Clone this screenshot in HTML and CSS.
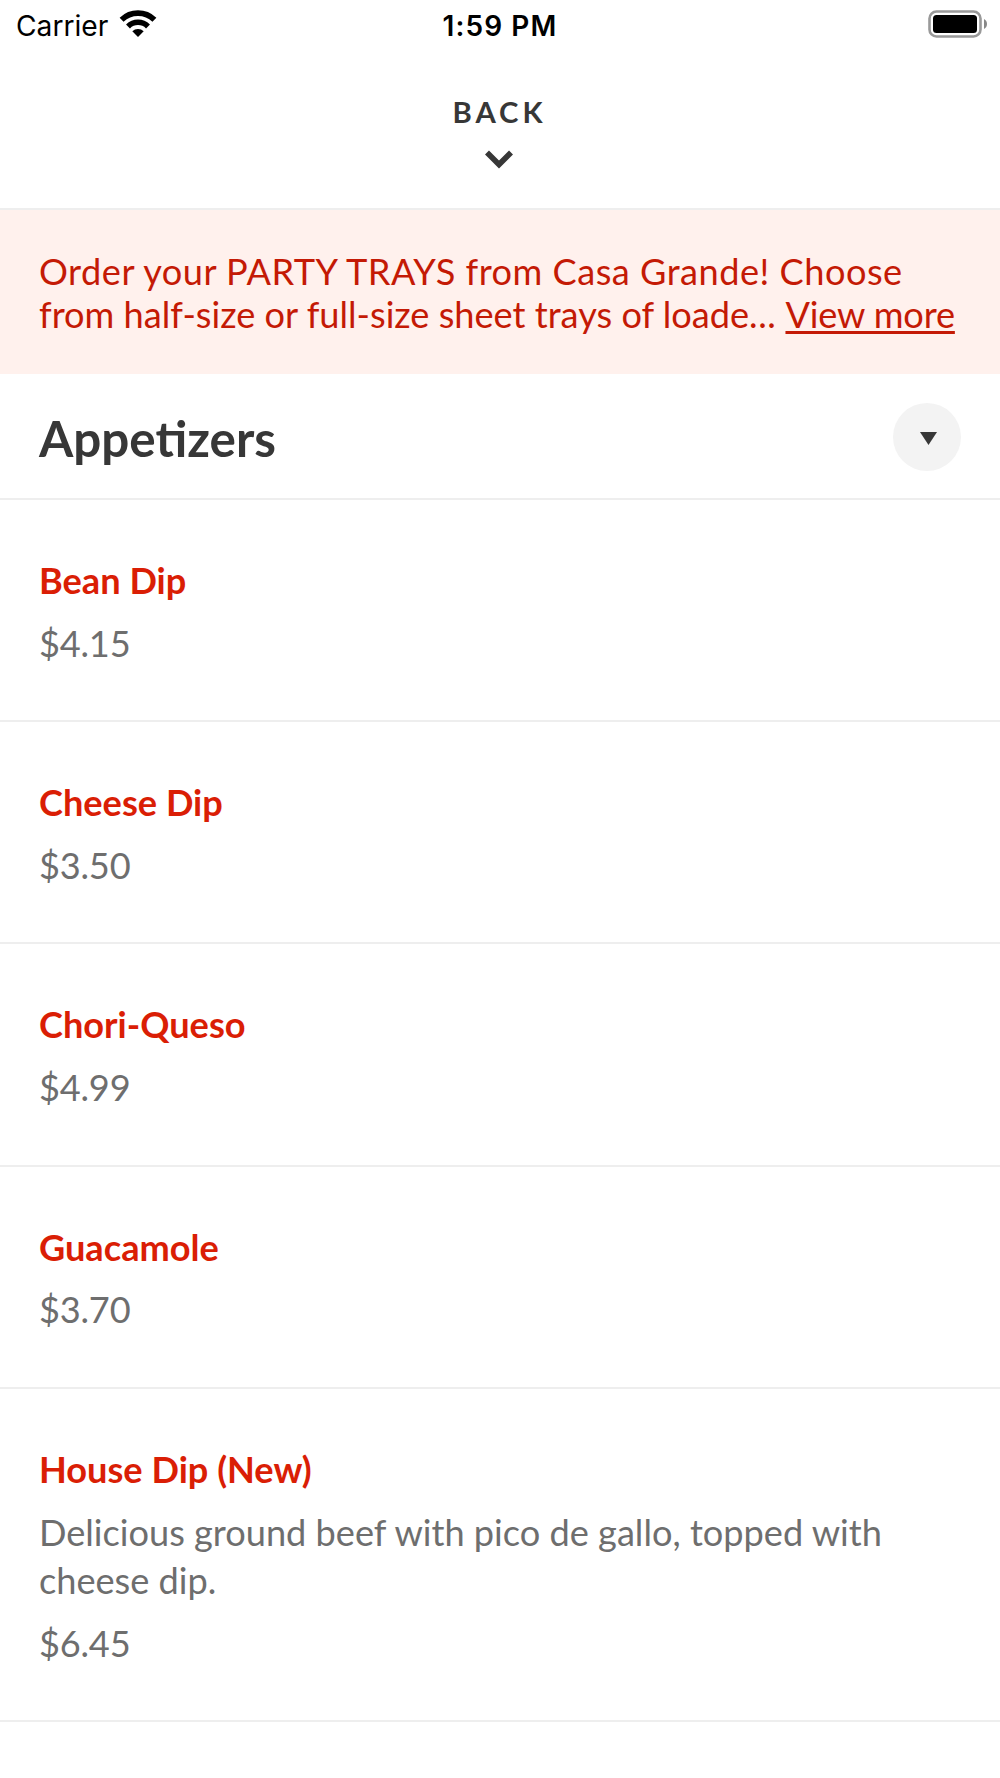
FILE: index.html
```html
<!DOCTYPE html>
<html lang="en">
<head>
<meta charset="utf-8">
<title>Menu</title>
<link rel="stylesheet" href="styles.css">
</head>
<body>
<header class="status">
  <div class="carrier"><span>Carrier</span>
    <svg class="wifi" width="38" height="28" viewBox="0 0 38 28"><g fill="none" stroke="#000" stroke-width="5.600"><path d="M2.600 9.800a23.500 23.500 0 0 1 32.800 0"/><path d="M9 16.400a14.300 14.300 0 0 1 20 0"/></g><path d="M13.300 21.200a8.200 8.200 0 0 1 11.400 0L19 27z"/></svg>
  </div>
  <div class="time">1:59 PM</div>
  <svg class="battery" width="60" height="28" viewBox="0 0 60 28"><rect x="1.500" y="1.500" width="51" height="25" rx="7" fill="none" stroke="#999" stroke-width="2.600"/><rect x="5" y="5" width="44" height="18" rx="3.500"/><path d="M56 9v10q3-1.700 3-5T56 9z" fill="#888"/></svg>
</header>
<nav class="back"><span class="back-label">BACK</span>
  <svg class="chevron" width="28" height="19" viewBox="0 0 28 19"><path d="M2 2.500 14 14.500 26 2.500" fill="none" stroke="#373737" stroke-width="5.600"/></svg>
</nav>
<section class="notice">
  <div class="lead">Order your PARTY TRAYS from Casa Grande! Choose</div>
  <div>from half-size or full-size sheet trays of loade<span class="dots">...</span> <a>View more</a></div>
</section>
<section class="category"><h1>Appetizers</h1>
  <div class="toggle"><svg width="17" height="13" viewBox="0 0 17 13"><path d="M0 0h17L8.500 13z" fill="#373737"/></svg></div>
</section>
<main>
  <article class="item"><h2>Bean Dip</h2><p class="price">$4.15</p></article>
  <article class="item"><h2>Cheese Dip</h2><p class="price">$3.50</p></article>
  <article class="item"><h2>Chori-Queso</h2><p class="price">$4.99</p></article>
  <article class="item"><h2>Guacamole</h2><p class="price">$3.70</p></article>
  <article class="item"><h2>House Dip (New)</h2><p class="desc">Delicious ground beef with pico de gallo, topped with<br>cheese dip.</p><p class="price">$6.45</p></article>
</main>
</body>
</html>
```
FILE: styles.css
```css
* { box-sizing: border-box; margin: 0; padding: 0; }
body { width: 1000px; height: 1778px; overflow: hidden; background: #fff; color: #373737; font-family: Lato, sans-serif; }
svg { display: block; flex: none; }
.status { display: grid; grid-template-columns: 1fr auto 1fr; align-items: center; height: 50px; padding: 1px 12px 0 16px; font: 28.200px Inter, sans-serif; color: #000; }
.carrier { display: flex; align-items: center; gap: 11px; }
.wifi { margin-bottom: 3px; }
.time { font-weight: 600; font-size: 28px; letter-spacing: 1.100px; margin-right: 4px; }
.battery { justify-self: end; margin-bottom: 3px; }
.back { height: 160px; padding-top: 44px; border-bottom: 2px solid #eee; display: flex; flex-direction: column; align-items: center; }
.back-label { font-weight: 700; font-size: 29.300px; line-height: 36px; letter-spacing: 4px; margin: 0 1px 20px 0; }
.chevron { margin-right: 3px; }
.notice { height: 164px; padding: 40px 39px 0; background: #fff1ed; color: #c41a05; font-size: 36.160px; line-height: 43.400px; white-space: nowrap; }
.lead { letter-spacing: 0.500px; }
.dots { letter-spacing: 0.500px; }
.notice a { letter-spacing: -0.150px; text-decoration: underline; text-decoration-thickness: 2.500px; text-underline-offset: 3px; text-decoration-skip-ink: none; }
.category { height: 126px; padding: 2px 39px 0 39px; border-bottom: 2px solid #eee; display: flex; justify-content: space-between; align-items: center; }
h1 { font-size: 49.400px; line-height: 58px; font-weight: 700; padding-top: 2px; }
.toggle { width: 68px; height: 68px; border-radius: 50%; background: #f3f3f3; display: flex; align-items: center; justify-content: center; padding: 2px 0 0 2px; }
.item { padding: 56px 39px 53.250px; border-bottom: 2px solid #eee; }
h2 { font-size: 36.160px; line-height: 48.330px; font-weight: 700; color: #da1e05; }
.price, .desc { margin-top: 14.330px; font-size: 36.160px; line-height: 48.330px; color: #6e6e6e; white-space: nowrap; }
.price { letter-spacing: -0.200px; }
```
